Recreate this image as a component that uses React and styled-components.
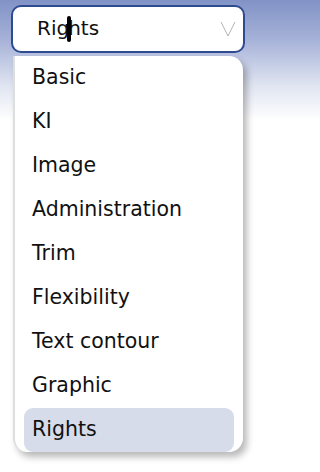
import React from "react";
import styled, { createGlobalStyle } from "styled-components";

const Global = createGlobalStyle`
  html, body { margin: 0; padding: 0; }
  body {
    width: 262px;
    height: 472px;
    overflow: hidden;
    background: linear-gradient(to bottom, #8192c6 0px, #a6b2d8 40px, #dfe4f1 85px, #ffffff 120px);
    font-family: "DejaVu Sans", Inter, sans-serif;
    color: #111;
  }
`;

const Page = styled.div`
  display: flex;
  flex-direction: column;
  padding: 5px 17px 0 11px;
`;

const Select = styled.div`
  box-sizing: border-box;
  height: 48px;
  display: flex;
  align-items: center;
  justify-content: space-between;
  padding: 0 7px 2px 24px;
  background: #fff;
  border: 2px solid #2d4b8e;
  border-radius: 10px;
  font-size: 20px;
`;

const Value = styled.span`
  display: flex;
  align-items: center;
`;

const Caret = styled.span`
  display: inline-block;
  width: 4px;
  height: 26px;
  background: #000;
  border-radius: 2px;
  margin: 2px -3px 0 -2px;
  position: relative;
  z-index: 1;
`;

const Chevron = styled.svg`
  margin-top: 2px;
`;

const Panel = styled.ul`
  list-style: none;
  margin: 3px 0 0 2px;
  padding: 0 9px 0 9px;
  width: 230px;
  box-sizing: border-box;
  background: #fff;
  border-left: 2px solid #dedede;
  border-radius: 0 14px 14px 14px;
  box-shadow: 4px 5px 7px rgba(0, 0, 0, 0.28);
`;

const Item = styled.li`
  height: 44px;
  display: flex;
  align-items: center;
  padding: 0 8px 3px;
  box-sizing: border-box;
  font-size: 20.5px;
  border-radius: 9px;
  background: ${(p) => (p.$selected ? "#d6dcea" : "transparent")};
`;

const items = [
  "Basic",
  "KI",
  "Image",
  "Administration",
  "Trim",
  "Flexibility",
  "Text contour",
  "Graphic",
  "Rights",
];

export default function App() {
  return (
    <>
      <Global />
      <Page>
        <Select>
          <Value>
            Rig<Caret />hts
          </Value>
          <Chevron width="16" height="16" viewBox="0 0 16 16">
            <path d="M1 1 L8 15 L15 1" fill="none" stroke="#b3b3b3" strokeWidth="1" />
          </Chevron>
        </Select>
        <Panel>
          {items.map((it) => (
            <Item key={it} $selected={it === "Rights"}>
              {it}
            </Item>
          ))}
        </Panel>
      </Page>
    </>
  );
}
